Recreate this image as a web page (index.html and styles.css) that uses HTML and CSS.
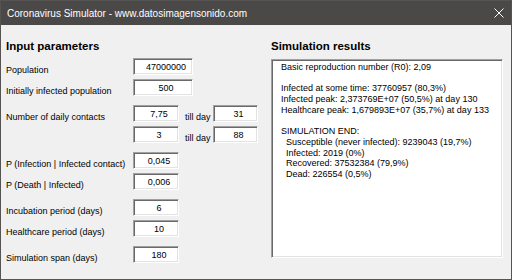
FILE: index.html
```html
<!DOCTYPE html>
<html lang="en">
<head>
    <meta charset="UTF-8">
    <title>Coronavirus Simulator</title>
    <link rel="stylesheet" href="styles.css">
</head>
<body>
    <div class="window">
        <div class="titlebar">
            <span class="title">Coronavirus Simulator - www.datosimagensonido.com</span>
            <svg class="close" width="10" height="10" viewBox="0 0 10 10">
                <path d="M0.5 0.5 L9.5 9.5 M9.5 0.5 L0.5 9.5" stroke="#fff" stroke-width="1" fill="none"/>
            </svg>
        </div>

        <div class="client">
            <div class="params">
                <h2>Input parameters</h2>

                <div class="row">
                    <label class="label">Population</label>
                    <input class="field wide" type="text" value="47000000">
                </div>
                <div class="row">
                    <label class="label">Initially infected population</label>
                    <input class="field wide" type="text" value="500">
                </div>

                <div class="row gap">
                    <label class="label">Number of daily contacts</label>
                    <input class="field" type="text" value="7,75">
                    <span class="till">till day</span>
                    <input class="field day" type="text" value="31">
                </div>
                <div class="row">
                    <span class="label"></span>
                    <input class="field" type="text" value="3">
                    <span class="till">till day</span>
                    <input class="field day" type="text" value="88">
                </div>

                <div class="row gap">
                    <label class="label">P (Infection | Infected contact)</label>
                    <input class="field" type="text" value="0,045">
                </div>
                <div class="row">
                    <label class="label">P (Death | Infected)</label>
                    <input class="field" type="text" value="0,006">
                </div>

                <div class="row gap">
                    <label class="label">Incubation period (days)</label>
                    <input class="field" type="text" value="6">
                </div>
                <div class="row">
                    <label class="label">Healthcare period (days)</label>
                    <input class="field" type="text" value="10">
                </div>

                <div class="row gap">
                    <label class="label">Simulation span (days)</label>
                    <input class="field" type="text" value="180">
                </div>
            </div>

            <div class="results">
                <h2>Simulation results</h2>
                <div class="output">Basic reproduction number (R0): 2,09

Infected at some time: 37760957 (80,3%)
Infected peak: 2,373769E+07 (50,5%) at day 130
Healthcare peak: 1,679893E+07 (35,7%) at day 133

SIMULATION END:
  Susceptible (never infected): 9239043 (19,7%)
  Infected: 2019 (0%)
  Recovered: 37532384 (79,9%)
  Dead: 226554 (0,5%)</div>
            </div>
        </div>
    </div>
</body>
</html>
```

FILE: styles.css
```css
* {
    box-sizing: border-box;
}

body {
    margin: 0;
    background-color: #f0f0f0;
    font-family: "Liberation Sans", Arial, sans-serif;
    color: #000;
}

.window {
    width: 512px;
    height: 280px;
    border: 1px solid #555453;
    background-color: #f0f0f0;
}

.titlebar {
    height: 24px;
    background-color: #4a4948;
    color: #fff;
    display: flex;
    align-items: center;
    justify-content: space-between;
    padding: 0 7px 0 6px;
    font-size: 10px;
}

.close {
    display: block;
}

.client {
    display: flex;
    padding-top: 13px;
}

.params {
    width: 270px;
    padding-left: 5px;
}

.results {
    width: 232px;
}

h2 {
    margin: 0 0 4px;
    font-size: 11.5px;
    line-height: 16px;
    font-weight: bold;
}

.results h2 {
    margin-bottom: 5px;
}

.row {
    display: flex;
    height: 17px;
    margin-top: 4px;
    font-size: 9px;
}

.row.gap {
    margin-top: 9px;
}

.label {
    width: 127px;
    padding-top: 6px;
    line-height: 13px;
    flex-shrink: 0;
}

.till {
    width: 34px;
    padding: 6px 0 0 6px;
    line-height: 13px;
}

/* sunken 3d box like the old windows edit control */
.field,
.output {
    border: 1px solid;
    border-color: #a0a0a0 #fff #fff #a0a0a0;
    box-shadow: inset 1px 1px 0 #696969, inset -1px -1px 0 #e3e3e3;
    background-color: #fff;
}

.field {
    width: 46px;
    height: 17px;
    margin: 0;
    padding: 0 0 0 6px;
    font-family: inherit;
    font-size: 9px;
    text-align: center;
    outline: none;
}

.field.wide {
    width: 60px;
}

.field.day {
    width: 45px;
}

.output {
    height: 199px;
    padding: 2px 9px;
    font-size: 9px;
    line-height: 10.7px;
    white-space: pre;
}
```
